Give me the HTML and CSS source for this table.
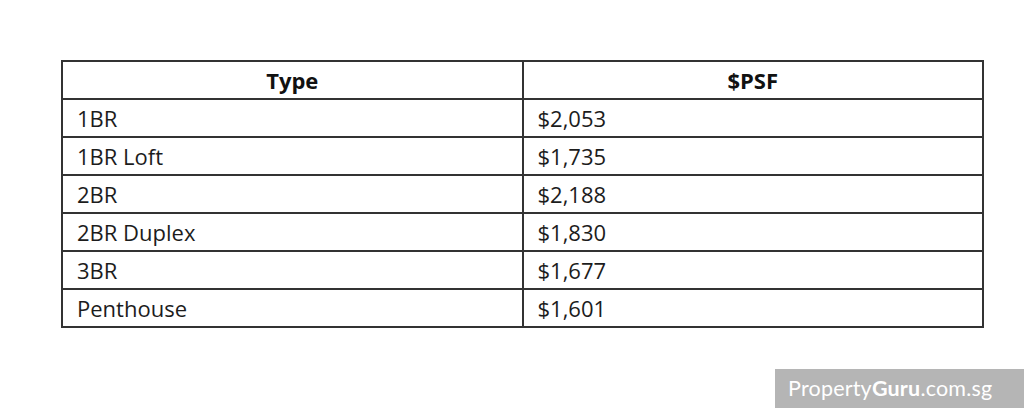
FILE: index.html
```html
<!DOCTYPE html>
<html>
<head>
<meta charset="utf-8">
<link rel="stylesheet" href="styles.css">
</head>
<body>
<div class="page">
  <table class="psf">
    <thead>
      <tr><th>Type</th><th>$PSF</th></tr>
    </thead>
    <tbody>
      <tr><td>1BR</td><td>$2,053</td></tr>
      <tr><td>1BR Loft</td><td>$1,735</td></tr>
      <tr><td>2BR</td><td>$2,188</td></tr>
      <tr><td>2BR Duplex</td><td>$1,830</td></tr>
      <tr><td>3BR</td><td>$1,677</td></tr>
      <tr><td>Penthouse</td><td>$1,601</td></tr>
    </tbody>
  </table>
  <div class="watermark">Property<b>Guru</b>.com.sg</div>
</div>
</body>
</html>
```
FILE: styles.css
```css
html, body {
  margin: 0;
  padding: 0;
  background: #ffffff;
}
.page {
  position: relative;
  width: 1024px;
  height: 408px;
  padding: 60px 0 0 61px;
  box-sizing: border-box;
  overflow: hidden;
}
.psf {
  border-collapse: collapse;
  width: 923px;
  table-layout: fixed;
  font-family: "Open Sans", "Liberation Sans", sans-serif;
  font-size: 22px;
  color: #1c1c1c;
}
.psf th, .psf td {
  border: 2px solid #333333;
  height: 38px;
  padding: 0 0 0 14px;
  line-height: 26px;
  text-align: left;
  box-sizing: border-box;
}
.psf th {
  font-weight: 700;
  text-align: center;
  padding: 0;
  color: #111111;
}
.watermark {
  position: absolute;
  left: 775px;
  top: 369px;
  width: 249px;
  height: 39px;
  background: #b5b5b5;
  color: #ffffff;
  font-family: "Lato", "Open Sans", sans-serif;
  font-size: 21.5px;
  line-height: 39px;
  padding-left: 13px;
  box-sizing: border-box;
  letter-spacing: 0.2px;
}
.watermark b {
  font-weight: 700;
}
```
